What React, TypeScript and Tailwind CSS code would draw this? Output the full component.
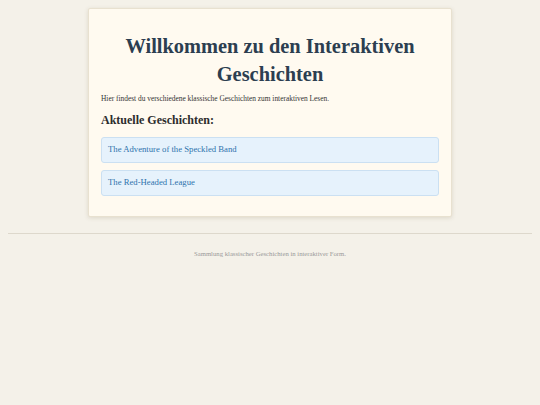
const STORIES = ['The Adventure of the Speckled Band', 'The Red-Headed League'];

export default function App() {
    return (
        <div className="min-h-[405px] bg-[#f4f1e9] px-2 pt-2 pb-8 font-['Liberation_Serif',Georgia,serif]">
            {/* Card */}
            <div className="mx-auto w-[364px] bg-[#fffaf0] border border-[#e8e1d0] rounded-[2px] shadow-[0_1px_4px_rgba(120,100,60,0.18)] px-[12px] pt-[23px] pb-[20px]">
                <h1 className="text-center text-[20.4px] leading-[28px] font-bold text-[#2c3e50]">
                    Willkommen zu den Interaktiven Geschichten
                </h1>
                <p className="mt-[6px] text-[7.4px] leading-[9px] text-[#333]">
                    Hier findest du verschiedene klassische Geschichten zum interaktiven Lesen.
                </p>
                <h2 className="mt-[9px] text-[12px] leading-[16px] font-bold text-[#2c2c2c]">
                    Aktuelle Geschichten:
                </h2>
                <ul className="mt-[9px] flex flex-col gap-[7px]">
                    {STORIES.map(s => (
                        <li
                            key={s}
                            className="h-[26px] flex items-center px-[6px] bg-[#e6f2fc] border border-[#cbe0f2] rounded-[3px] text-[8.7px] text-[#2f72ad]"
                        >
                            {s}
                        </li>
                    ))}
                </ul>
            </div>

            {/* Footer */}
            <div className="mt-[16px] border-t border-[#ddd8cc] pt-[15px] text-center text-[6.7px] text-[#9a9a9a]">
                Sammlung klassischer Geschichten in interaktiver Form.
            </div>
        </div>
    );
}
